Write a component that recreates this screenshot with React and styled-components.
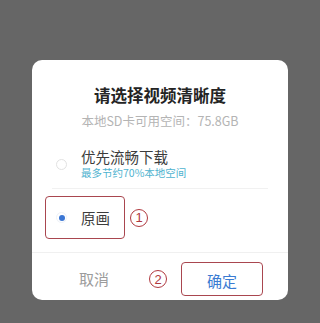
import React from 'react';
import styled, { createGlobalStyle } from 'styled-components';

const GlobalStyle = createGlobalStyle`
  html, body {
    margin: 0;
    padding: 0;
    background: #666666;
  }
  body {
    font-family: 'Noto Sans CJK SC', 'Noto Sans', sans-serif;
  }
`;

const Page = styled.div`
  width: 320px;
  height: 323px;
  background: #666666;
  padding: 60px 0 0 32px;
  box-sizing: border-box;
`;

const Dialog = styled.div`
  width: 256px;
  height: 240px;
  background: #ffffff;
  border-radius: 10px;
  display: flex;
  flex-direction: column;
  overflow: hidden;
`;

const Header = styled.div`
  padding-top: 25px;
  display: flex;
  flex-direction: column;
  align-items: center;
`;

const Title = styled.div`
  font-size: 16.5px;
  line-height: 20px;
  font-weight: 700;
  color: #242424;
`;

const Subtitle = styled.div`
  margin-top: 8px;
  font-size: 12.5px;
  line-height: 16px;
  color: #b4b4b4;
`;

const Options = styled.div`
  padding: 0 20px;
  display: flex;
  flex-direction: column;
`;

const OptionRow = styled.div`
  display: flex;
  align-items: center;
  gap: 14px;
  margin-top: ${(p) => p.$top || 0}px;
  padding-left: ${(p) => p.$indent || 0}px;
`;

const Radio = styled.span`
  width: 11px;
  height: 11px;
  border-radius: 50%;
  box-sizing: border-box;
  border: 1px solid ${(p) => (p.$checked ? '#eef2f8' : '#e2e2e2')};
  display: flex;
  align-items: center;
  justify-content: center;
  flex-shrink: 0;

  &::after {
    content: '';
    width: 6px;
    height: 6px;
    border-radius: 50%;
    background: ${(p) => (p.$checked ? '#3b76d4' : 'transparent')};
  }
`;

const OptionText = styled.div`
  display: flex;
  flex-direction: column;
`;

const OptionLabel = styled.div`
  font-size: 14.5px;
  line-height: 17px;
  color: #3c3c3c;
`;

const OptionHint = styled.div`
  margin-top: 1px;
  font-size: 10.5px;
  line-height: 14px;
  color: #4fb3cf;
`;

const Divider = styled.div`
  height: 1px;
  background: #f1f1f1;
  margin-top: 8px;
`;

const Highlight = styled.div`
  width: 80px;
  height: 43px;
  box-sizing: border-box;
  border: 1.5px solid #a9464f;
  border-radius: 4px;
  margin-left: -7px;
  padding-left: 10px;
  display: flex;
  align-items: center;
`;

const Mark = styled.span`
  width: 18px;
  height: 18px;
  box-sizing: border-box;
  border: 1.6px solid #b0393f;
  border-radius: 50%;
  display: flex;
  align-items: center;
  justify-content: center;
  font-family: 'Liberation Sans', Arial, sans-serif;
  font-size: 13px;
  line-height: 1;
  color: #b0393f;
  flex-shrink: 0;
  margin-left: ${(p) => p.$left || 0}px;
`;

const AnnotatedRow = styled.div`
  display: flex;
  align-items: center;
  margin-top: 7px;
`;

const Footer = styled.div`
  margin-top: 13px;
  border-top: 1px solid #f0f0f0;
  flex: 1;
  display: flex;
  align-items: center;
  padding: 5px 0 0 47px;
  align-self: stretch;
  box-sizing: border-box;
`;

const TextButton = styled.button`
  border: none;
  background: none;
  padding: 0;
  font-family: inherit;
  font-size: 15px;
  line-height: 20px;
  color: #9c9c9c;
`;

const ConfirmButton = styled.button`
  margin-left: 14px;
  width: 82px;
  height: 34px;
  box-sizing: border-box;
  border: 1.5px solid #a9464f;
  border-radius: 4px;
  background: #ffffff;
  font-family: inherit;
  font-size: 15px;
  color: #3a7bd2;
  padding: 2px 0 0;
`;

export default function App() {
  return (
    <>
      <GlobalStyle />
      <Page>
        <Dialog>
          <Header>
            <Title>请选择视频清晰度</Title>
            <Subtitle>本地SD卡可用空间：75.8GB</Subtitle>
          </Header>
          <Options>
            <OptionRow $top={19} $indent={4}>
              <Radio />
              <OptionText>
                <OptionLabel>优先流畅下载</OptionLabel>
                <OptionHint>最多节约70%本地空间</OptionHint>
              </OptionText>
            </OptionRow>
            <Divider />
            <AnnotatedRow>
              <Highlight>
                <OptionRow>
                  <Radio $checked />
                  <OptionLabel>原画</OptionLabel>
                </OptionRow>
              </Highlight>
              <Mark $left={5}>1</Mark>
            </AnnotatedRow>
          </Options>
          <Footer>
            <TextButton>取消</TextButton>
            <Mark $left={40}>2</Mark>
            <ConfirmButton>确定</ConfirmButton>
          </Footer>
        </Dialog>
      </Page>
    </>
  );
}
